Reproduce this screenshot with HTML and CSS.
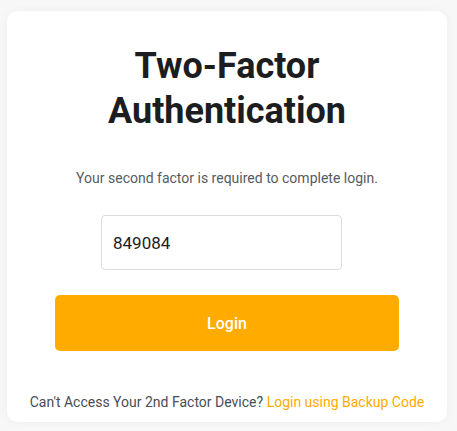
FILE: index.html
```html
<!DOCTYPE html>
<html lang="en">
<head>
<meta charset="utf-8">
<title>Two-Factor Authentication</title>
<link rel="stylesheet" href="styles.css">
</head>
<body>
<main class="card">
  <h1 class="title">Two-Factor<br>Authentication</h1>
  <p class="subtitle">Your second factor is required to complete login.</p>
  <input class="code-input" type="text" value="849084">
  <button class="login-btn" type="button">Login</button>
  <p class="footer">Can't Access Your 2nd Factor Device? <a class="backup-link" href="#">Login using Backup Code</a></p>
</main>
</body>
</html>
```

FILE: styles.css
```css
html, body {
  margin: 0;
  padding: 0;
}
body {
  background: #f7f7f7;
  font-family: Roboto, "Liberation Sans", sans-serif;
  padding: 11px 10px 9px 7px;
  box-sizing: border-box;
  height: 431px;
}
.card {
  box-sizing: border-box;
  width: 440px;
  height: 411px;
  background: #ffffff;
  border-radius: 10px;
  box-shadow: 0 0 10px rgba(0, 0, 0, 0.04);
  display: flex;
  flex-direction: column;
  align-items: center;
  padding-top: 33px;
}
.title {
  margin: 0;
  font-size: 36px;
  line-height: 45px;
  font-weight: 700;
  color: #1c1d21;
  text-align: center;
}
.subtitle {
  margin: 34px 0 0;
  font-size: 14px;
  line-height: 20px;
  color: #565a63;
}
.code-input {
  margin: 27px 11px 0 0;
  box-sizing: border-box;
  width: 241px;
  height: 55px;
  border: 1px solid #dcdcdc;
  border-radius: 4px;
  padding: 0 11px;
  font-family: Roboto, "Liberation Sans", sans-serif;
  font-size: 17px;
  color: #1c1d21;
  outline: none;
}
.login-btn {
  margin-top: 25px;
  width: 344px;
  height: 56px;
  border: none;
  border-radius: 5px;
  background: #ffab00;
  color: #ffffff;
  font-family: Roboto, "Liberation Sans", sans-serif;
  font-size: 16px;
  font-weight: 500;
}
.footer {
  margin: 41px 0 0;
  font-size: 14px;
  line-height: 20px;
  color: #4a4d55;
}
.backup-link {
  color: #ffab00;
  text-decoration: none;
}
```
